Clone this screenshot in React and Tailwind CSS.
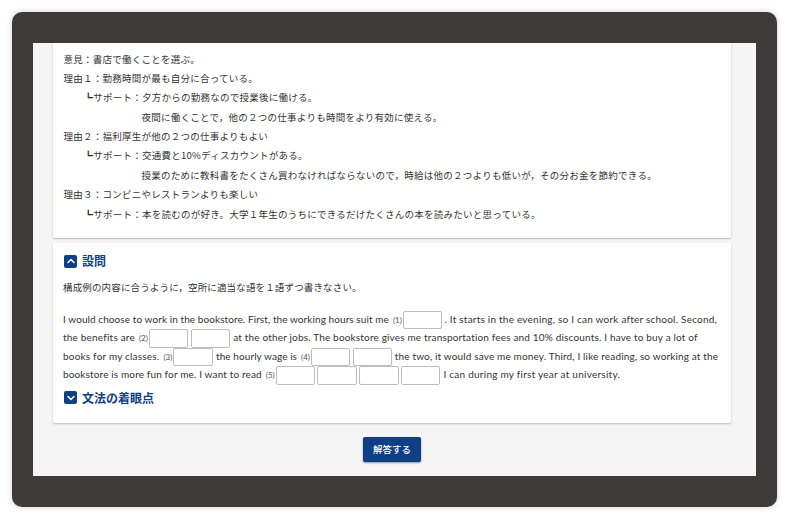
import React from "react";
import { ChevronDown, ChevronUp } from "lucide-react";

const jp = "font-['Noto_Sans_CJK_JP','Noto_Sans',sans-serif]";

// 構成例の行
const outline = [
  { text: "意見：書店で働くことを選ぶ。" },
  { text: "理由１：勤務時間が最も自分に合っている。" },
  { text: "サポート：夕方からの勤務なので授業後に働ける。", sub: true },
  { text: "夜間に働くことで，他の２つの仕事よりも時間をより有効に使える。", cont: true },
  { text: "理由２：福利厚生が他の２つの仕事よりもよい" },
  { text: "サポート：交通費と10%ディスカウントがある。", sub: true },
  { text: "授業のために教科書をたくさん買わなければならないので，時給は他の２つよりも低いが，その分お金を節約できる。", cont: true },
  { text: "理由３：コンビニやレストランよりも楽しい" },
  { text: "サポート：本を読むのが好き。大学１年生のうちにできるだけたくさんの本を読みたいと思っている。", sub: true },
];

const Blank = ({ n }) => (
  <>
    {n && <span className="ml-[4px] mr-[1px] text-[8px] tracking-normal text-[#555]">({n})</span>}
    <span className="mr-[2.2px] inline-block h-[18.5px] w-[39.5px] rounded-[2px] border border-[#bdbdbd] bg-white align-middle" />
  </>
);

const Heading = ({ open, children }) => (
  <div className="flex items-center gap-[5px]">
    <span className="flex h-[13px] w-[13px] items-center justify-center rounded-[2px] bg-[#0f3f87] text-white">
      {open ? <ChevronUp size={12} strokeWidth={3} /> : <ChevronDown size={12} strokeWidth={3} />}
    </span>
    <span className="text-[12px] leading-[14px] font-bold text-[#0f3f87]">{children}</span>
  </div>
);

const EnLine = ({ children }) => (
  <div className="flex h-[18.4px] items-center whitespace-nowrap">
    <p className="whitespace-pre">{children}</p>
  </div>
);

export default function App() {
  return (
    <div className={`h-[519px] w-[789px] bg-white pt-3 pl-3 ${jp}`}>
      {/* 外枠 */}
      <div className="h-[495px] w-[765px] rounded-[10px] bg-[#3e3a39] px-[21px] pt-[31px] shadow-[0_0_6px_rgba(0,0,0,0.18)]">
        <div className="h-[433px] overflow-hidden bg-[#f5f5f5] pr-[25px] pb-[14px] pl-5">
          {/* 構成例カード */}
          <div className="h-[195px] rounded-b-[2px] bg-white pt-[6.5px] pl-[10.5px] text-[9.5px] tracking-[0.25px] text-[#333] shadow-[0_1px_2px_rgba(0,0,0,0.25)]">
            {outline.map((line) => (
              <div
                key={line.text}
                className={`h-[19.4px] leading-[19.4px] whitespace-nowrap ${line.sub ? "pl-5" : ""} ${line.cont ? "pl-[78px]" : ""}`}
              >
                {line.sub && <span className="font-bold text-[#222]">┗</span>}
                {line.text}
              </div>
            ))}
          </div>

          {/* 設問カード */}
          <div className="mt-[5px] h-[180px] rounded-[2px] bg-white pt-[11px] pl-[11px] shadow-[0_1px_2px_rgba(0,0,0,0.25)]">
            <Heading open>設問</Heading>
            <p className="mt-3 -ml-px text-[9.5px] leading-[14px] tracking-[0.15px] text-[#333]">
              構成例の内容に合うように，空所に適当な語を１語ずつ書きなさい。
            </p>
            <div className="mt-[17px] -ml-px font-['Lato',sans-serif] text-[10px] text-[#333]">
              <EnLine>
                <span className="tracking-[0.08px]">I would choose to work in the bookstore. First, the working hours suit me</span>
                <Blank n="1" />
                <span className="tracking-[0.22px]">. It starts in the evening, so I can work after school. Second,</span>
              </EnLine>
              <EnLine>
                <span className="tracking-[0.2px]">the benefits are</span>
                <Blank n="2" />
                <Blank />
                <span className="ml-[1px] tracking-[0.17px]">at the other jobs. The bookstore gives me transportation fees and 10% discounts. I have to buy a lot of</span>
              </EnLine>
              <EnLine>
                <span className="tracking-[0.2px]">books for my classes.</span>
                <Blank n="3" />
                <span className="ml-[1px] tracking-[0.08px]">the hourly wage is</span>
                <Blank n="4" />
                <Blank />
                <span className="ml-[0.5px] tracking-[0.15px]">the two, it would save me money. Third, I like reading, so working at the</span>
              </EnLine>
              <EnLine>
                <span className="tracking-[0.14px]">bookstore is more fun for me. I want to read</span>
                <Blank n="5" />
                <Blank />
                <Blank />
                <Blank />
                <span className="ml-[1px] tracking-[0.25px]">I can during my first year at university.</span>
              </EnLine>
            </div>
            <div className="mt-[6px]">
              <Heading>文法の着眼点</Heading>
            </div>
          </div>

          <div className="mt-[14px] flex justify-center">
            <button className="h-[25px] w-[58px] rounded-[2px] bg-[#0f3f87] text-[9.5px] font-medium text-white shadow-[0_1px_2px_rgba(0,0,0,0.4)]">
              解答する
            </button>
          </div>
        </div>
      </div>
    </div>
  );
}
